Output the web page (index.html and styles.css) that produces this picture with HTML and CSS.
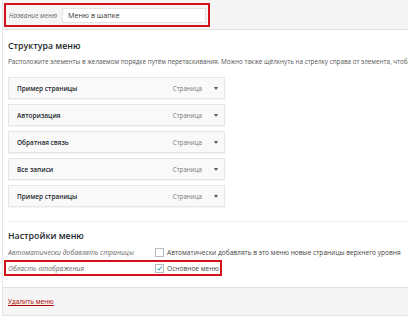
FILE: index.html
```html
<!DOCTYPE html>
<html lang="ru">
<head>
<meta charset="utf-8">
<link rel="stylesheet" href="styles.css">
</head>
<body>
<div class="frame">
  <div class="header">
    <div class="mark name-box">
      <span class="name-label">Название меню</span>
      <span class="name-input">Меню в шапке</span>
    </div>
  </div>
  <div class="main">
    <h3 class="title">Структура меню</h3>
    <p class="desc">Расположите элементы в желаемом порядке путём перетаскивания. Можно также щёлкнуть на стрелку справа от элемента, чтобы</p>
    <ul class="items">
      <li class="item"><span class="item-title">Пример страницы</span><span class="item-type">Страница</span><span class="arrow"></span></li>
      <li class="item"><span class="item-title">Авторизация</span><span class="item-type">Страница</span><span class="arrow"></span></li>
      <li class="item"><span class="item-title">Обратная связь</span><span class="item-type">Страница</span><span class="arrow"></span></li>
      <li class="item"><span class="item-title">Все записи</span><span class="item-type">Страница</span><span class="arrow"></span></li>
      <li class="item"><span class="item-title">Пример страницы</span><span class="item-type">Страница</span><span class="arrow"></span></li>
    </ul>
    <div class="settings">
      <h3 class="title">Настройки меню</h3>
      <div class="row">
        <span class="row-label">Автоматически добавлять страницы</span>
        <span class="check"></span>
        <span class="row-text">Автоматически добавлять в это меню новые страницы верхнего уровня</span>
      </div>
      <div class="row mark loc-box">
        <span class="row-label">Область отображения</span>
        <span class="check checked"><svg viewBox="0 0 10 10" width="9" height="9"><path d="M2 5.2 L4.2 7.4 L8.4 1.8" fill="none" stroke="#1e8cbe" stroke-width="1.4"/></svg></span>
        <span class="row-text">Основное меню</span>
      </div>
    </div>
  </div>
  <div class="footer">
    <a class="delete" href="#">Удалить меню</a>
  </div>
</div>
</body>
</html>
```
FILE: styles.css
```css
* { box-sizing: border-box; }
html, body { margin: 0; padding: 0; }
body {
  width: 408px;
  height: 320px;
  overflow: hidden;
  background: #fff;
  font-family: "Open Sans", "Noto Sans", sans-serif;
  color: #444;
}
.frame {
  margin-left: 2px;
  border-left: 1px solid #e5e5e5;
  width: 406px;
}
.header {
  height: 30px;
  background: #f5f5f5;
  border-bottom: 1px solid #e2e2e2;
  padding: 3px 0 0 1px;
}
.mark { border: 2px solid #d0121b; }
.name-box {
  width: 206px;
  height: 24px;
  display: flex;
  align-items: center;
  padding-left: 3px;
}
.name-label {
  font-size: 6.6px;
  font-style: italic;
  color: #666;
  width: 53px;
  white-space: nowrap;
}
.name-input {
  width: 144px;
  height: 15px;
  background: #fff;
  border: 1px solid #e4e4e4;
  font-size: 7.2px;
  color: #333;
  line-height: 13px;
  padding-left: 5px;
}
.main { padding: 0 0 0 5px; border-bottom: 1px solid #e2e2e2; }
.title {
  margin: 0;
  padding-top: 9px;
  font-size: 8.8px;
  line-height: 14px;
  font-weight: 600;
  color: #23282d;
}
.desc {
  margin: 4px 0 0;
  font-size: 6.3px;
  line-height: 10px;
  color: #555;
  white-space: nowrap;
  overflow: hidden;
}
.items {
  list-style: none;
  margin: 10px 0 0;
  padding: 0;
  display: flex;
  flex-direction: column;
  gap: 5px;
}
.item {
  width: 217px;
  height: 22px;
  background: #f9f9f9;
  border: 1px solid #e6e6e6;
  box-shadow: 0 1px 1px rgba(0,0,0,0.04);
  display: flex;
  align-items: center;
  padding: 0 0 0 8px;
}
.item-title {
  flex: 1;
  font-size: 6.5px;
  font-weight: 600;
  color: #23282d;
}
.item-type {
  font-size: 6.2px;
  color: #777;
}
.arrow {
  width: 0;
  height: 0;
  border-left: 2.5px solid transparent;
  border-right: 2.5px solid transparent;
  border-top: 3.5px solid #555;
  margin: 0 6px 0 12px;
}
.settings {
  margin-top: 14px;
  border-top: 1px solid #efefef;
  padding-top: 7px;
  padding-bottom: 11px;
}
.settings .title { padding-top: 0; }
.row {
  height: 16px;
  display: flex;
  align-items: center;
  margin-top: 1px;
  white-space: nowrap;
}
.row-label {
  flex: none;
  width: 147px;
  font-size: 6.8px;
  font-style: italic;
  color: #666;
}
.check {
  flex: none;
  width: 9px;
  height: 9px;
  border: 1px solid #b8bcc0;
  background: #fff;
  margin-right: 3px;
  display: flex;
  align-items: center;
  justify-content: center;
}
.check svg { display: block; }
.row-text {
  flex: none;
  font-size: 6.6px;
  color: #444;
}
.loc-box {
  width: 218px;
  margin-left: -4px;
  padding-left: 2px;
  margin-top: 0;
}
.loc-box .row-label { width: 147px; }
.footer {
  height: 28px;
  background: #f5f5f5;
  border-bottom: 1px solid #e2e2e2;
  display: flex;
  align-items: center;
  padding-left: 5px;
}
.delete {
  font-size: 6.5px;
  color: #a00;
  text-decoration: underline;
}
```
